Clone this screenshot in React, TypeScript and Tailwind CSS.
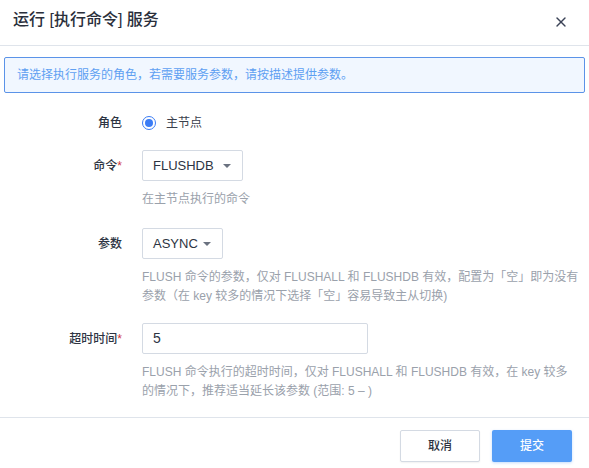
import { X } from "lucide-react";

function Caret() {
  return <span className="ml-auto h-0 w-0 border-x-[4px] border-t-[4px] border-x-transparent border-t-[#6b7280]" />;
}

function Row({ label, required, children, className = "" }: { label: string; required?: boolean; children: React.ReactNode; className?: string }) {
  return (
    <div className={`flex ${className}`}>
      <div className="w-[122px] shrink-0 pt-[7px] text-right text-[12px] font-medium leading-[18px] text-[#2d3442]">
        {label}
        {required && <span className="text-[#d0383e]">*</span>}
      </div>
      <div className="ml-[20px] flex-1">{children}</div>
    </div>
  );
}

function Help({ children }: { children: React.ReactNode }) {
  return <p className="mt-[9px] whitespace-nowrap text-[12px] leading-[19px] text-[#9aa1ab]">{children}</p>;
}

export default function App() {
  return (
    <div className="h-[468px] w-[589px] bg-white font-['Liberation_Sans','Noto_Sans_CJK_SC',sans-serif] text-[#2d3442]">
      {/* 标题 */}
      <div className="flex h-[46px] items-center border-b border-[#dfe4eb] pl-[13px] pr-[20px]">
        <h1 className="pb-[6px] text-[16px] font-medium text-[#2a2f3b]">运行 [执行命令] 服务</h1>
        <X className="ml-auto mb-[2px] h-[16px] w-[16px] text-[#3a4256]" strokeWidth={2} />
      </div>

      <div className="px-[4px] pt-[11px]">
        <div className="flex h-[36px] items-center rounded-[2px] border border-[#5b93e8] bg-[#f1f7ff] pl-[12px] text-[12px] text-[#5ea0f2]">
          请选择执行服务的角色，若需要服务参数，请按描述提供参数。
        </div>
      </div>

      <div className="pt-[21px]">
        {/* 角色 */}
        <div className="flex items-center">
          <div className="w-[122px] text-right text-[12px] font-medium text-[#2d3442]">角色</div>
          <span className="ml-[20px] flex h-[14px] w-[14px] items-center justify-center rounded-full border-[1.5px] border-[#3b7cf5]">
            <span className="h-[8px] w-[8px] rounded-full bg-[#3b7cf5]" />
          </span>
          <span className="ml-[10px] text-[12px] text-[#3a404c]">主节点</span>
        </div>

        {/* 命令 */}
        <Row label="命令" required className="mt-[18px]">
          <div className="flex h-[31px] w-[101px] items-center rounded-[2px] border border-[#d4dae3] pl-[10px] pr-[11px] text-[13px] text-[#2d3442]">
            FLUSHDB
            <Caret />
          </div>
          <Help>在主节点执行的命令</Help>
        </Row>

        {/* 参数 */}
        <Row label="参数" className="mt-[19px]">
          <div className="flex h-[31px] w-[81px] items-center rounded-[2px] border border-[#d4dae3] pl-[10px] pr-[11px] text-[13px] text-[#2d3442]">
            ASYNC
            <Caret />
          </div>
          <Help>
            FLUSH 命令的参数，仅对 FLUSHALL 和 FLUSHDB 有效，配置为「空」即为没有
            <br />
            参数（在 key 较多的情况下选择「空」容易导致主从切换)
          </Help>
        </Row>

        {/* 超时时间 */}
        <Row label="超时时间" required className="mt-[17px]">
          <div className="flex h-[31px] w-[226px] items-center rounded-[2px] border border-[#d4dae3] pl-[10px] text-[14px] text-[#2d3442]">
            5
          </div>
          <Help>
            FLUSH 命令执行的超时时间，仅对 FLUSHALL 和 FLUSHDB 有效，在 key 较多
            <br />
            的情况下，推荐适当延长该参数 (范围: 5 – )
          </Help>
        </Row>
      </div>

      {/* 底部 */}
      <div className="mt-[16px] flex justify-end gap-[12px] border-t border-[#dfe4eb] pr-[17px] pt-[12px]">
        <button className="h-[32px] w-[80px] rounded-[2px] border border-[#d4dae3] bg-white text-[12px] font-medium text-[#2d3442] shadow-[0_1px_2px_rgba(0,0,0,0.06)]">
          取消
        </button>
        <button className="h-[32px] w-[80px] rounded-[2px] bg-[#559df7] text-[12px] font-medium text-white shadow-[0_1px_3px_rgba(85,157,247,0.35)]">
          提交
        </button>
      </div>
    </div>
  );
}
